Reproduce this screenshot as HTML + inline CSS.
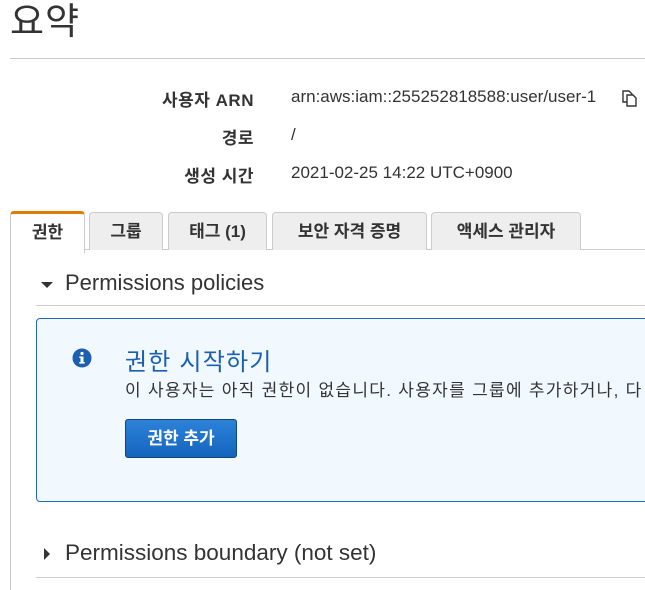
<!DOCTYPE html>
<html><head><meta charset="utf-8"><style>
body{margin:0;width:645px;height:588px;overflow:hidden;background:#fff;font-family:"Liberation Sans","Noto Sans CJK KR",sans-serif;color:#333;position:relative}
.a{position:absolute;white-space:nowrap}
.lbl{font-weight:bold;font-size:17px;text-align:right;right:391px;color:#333;letter-spacing:0.5px}
.val{left:291px;font-size:17px;color:#333}
.tab{position:absolute;top:212px;height:37px;border:1px solid #ccc;border-bottom:none;background:#eee;border-radius:4px 4px 0 0;font-size:17px;font-weight:bold;text-align:center;line-height:38px;color:#333}
</style></head><body>
<div class="a" style="left:10px;top:0;font-size:37px;color:#333;line-height:44px;letter-spacing:1px">요약</div>
<div class="a" style="left:10px;top:58px;width:635px;border-top:1px solid #ccc"></div>
<div class="a lbl" style="top:86px">사용자 ARN</div>
<div class="a val" style="top:87px">arn:aws:iam::255252818588:user/user-1</div>
<svg class="a" style="left:618px;top:88px" width="20" height="20" viewBox="0 0 20 20" fill="none" stroke="#333" stroke-width="1.4"><path d="M5 3h6l3 3v8H5z"/><path d="M9 7h6l3 3v8H9z" fill="#fff"/></svg>
<div class="a lbl" style="top:124px">경로</div>
<div class="a val" style="top:125px">/</div>
<div class="a lbl" style="top:162px">생성 시간</div>
<div class="a val" style="top:163px">2021-02-25 14:22 UTC+0900</div>

<div class="a" style="left:84px;top:249px;width:561px;border-top:1px solid #ccc"></div>
<div class="a" style="left:10px;top:250px;height:340px;border-left:1px solid #ccc"></div>
<div class="tab" style="left:10px;width:73px;background:#fff;border-top:3px solid #e07b00;top:211px;height:39px">권한</div>
<div class="tab" style="left:89px;width:72px">그룹</div>
<div class="tab" style="left:168px;width:97px">태그 (1)</div>
<div class="tab" style="left:272px;width:153px">보안 자격 증명</div>
<div class="tab" style="left:431px;width:148px">액세스 관리자</div>

<div class="a" style="left:41px;top:282px;width:0;height:0;border-left:6px solid transparent;border-right:6px solid transparent;border-top:6px solid #333"></div>
<div class="a" style="left:65px;top:270px;font-size:22px;color:#333">Permissions policies</div>
<div class="a" style="left:36px;top:305px;width:609px;border-top:1px solid #ccc"></div>

<div class="a" style="left:36px;top:318px;width:620px;height:182px;background:#f1f8fe;border:1px solid #1f6ab8;border-radius:4px"></div>
<svg class="a" style="left:72px;top:348px" width="20" height="20" viewBox="0 0 20 20"><circle cx="10" cy="10" r="9.5" fill="#1b5fb0"/><rect x="8.5" y="8.5" width="3" height="7" fill="#fff"/><rect x="7.3" y="14" width="5.4" height="1.6" fill="#fff"/><rect x="7.3" y="8.5" width="2" height="1.5" fill="#fff"/><circle cx="10" cy="5.5" r="1.6" fill="#fff"/></svg>
<div class="a" style="left:125px;top:342px;font-size:24px;color:#1b5fb0;letter-spacing:1.2px">권한 시작하기</div>
<div class="a" style="left:125px;top:376px;font-size:17px;color:#333;letter-spacing:1.3px">이 사용자는 아직 권한이 없습니다. 사용자를 그룹에 추가하거나, 다</div>
<div class="a" style="left:125px;top:419px;width:110px;height:37px;border:1px solid #13457a;border-radius:3px;background:linear-gradient(#2d82d8,#1464be);color:#fff;font-weight:bold;font-size:17px;text-align:center;line-height:37px">권한 추가</div>

<div class="a" style="left:44px;top:548px;width:0;height:0;border-top:6px solid transparent;border-bottom:6px solid transparent;border-left:6px solid #333"></div>
<div class="a" style="left:65px;top:540px;font-size:22.5px;color:#333">Permissions boundary (not set)</div>
<div class="a" style="left:36px;top:577px;width:609px;border-top:1px solid #ccc"></div>
</body></html>
